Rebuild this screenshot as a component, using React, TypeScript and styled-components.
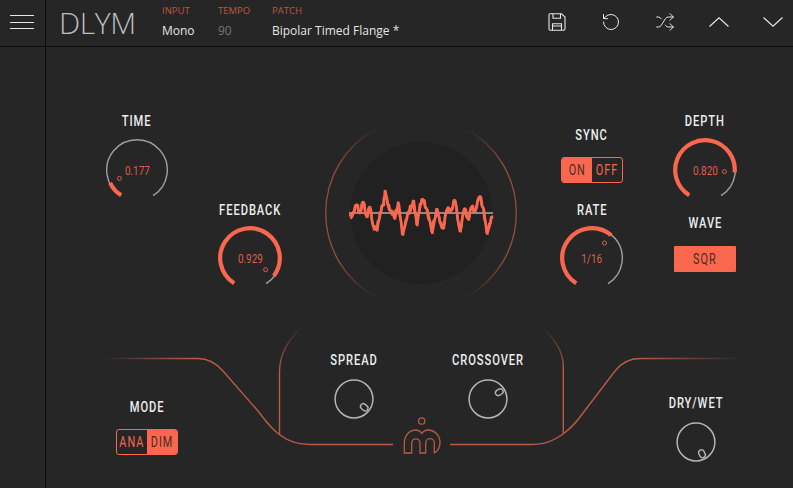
import React from "react";
import styled, { createGlobalStyle, css } from "styled-components";
import { RotateCcw, Shuffle } from "lucide-react";

const ACCENT = "#f9684e";
const LINE = "#b85a45";

const Global = createGlobalStyle`
  html, body { margin: 0; padding: 0; background: #262626; overflow: hidden; }
  * { box-sizing: border-box; }
`;

const condensed = css`
  font-family: "Roboto", "Liberation Sans", sans-serif;
  display: inline-block;
  white-space: nowrap;
  transform-origin: center;
`;

const Shell = styled.div`
  width: 793px; height: 488px; background: #262626; position: relative;
  font-family: "Open Sans", "Liberation Sans", sans-serif; overflow: hidden;
`;
const TopBar = styled.header`
  height: 47px; display: flex; align-items: stretch; border-bottom: 1px solid #0c0c0c;
`;
const MenuCell = styled.div`
  width: 46px; flex: none; border-right: 1px solid #0c0c0c; display: flex; flex-direction: column;
  gap: 5.5px; padding: 15px 11px 0 10px;
`;
const MenuLine = styled.span`
  display: block; height: 1px; background: #e8e8e8;
`;
const Brand = styled.div`
  width: 116px; flex: none; padding: 3px 0 0 13px; font-family: "Open Sans", sans-serif; font-weight: 300;
  font-size: 30px; line-height: 40px; color: #b9bec0; letter-spacing: -0.4px;
`;
const Field = styled.div<{ $w: number }>`
  width: ${p => p.$w}px; flex: none; padding-top: 5px;
`;
const FieldLabel = styled.div`
  font-size: 9.5px; line-height: 12px; color: #c0543f;
`;
const FieldValue = styled.div<{ $dim?: boolean }>`
  font-size: 12px; line-height: 18px; margin-top: 5px; color: ${p => (p.$dim ? "#777" : "#e2e4e4")};
`;
const Tools = styled.div`
  margin-left: auto; display: flex; align-items: center; gap: 30px; color: #e6e6e6; padding: 0 8px 2px 0;
`;
const Tool = styled.div`
  width: 24px; display: flex; justify-content: center; align-items: center;
`;

const Body = styled.main`
  position: relative; height: 441px; margin-left: 45px; border-left: 1px solid #0c0c0c;
`;
const Decor = styled.svg`
  position: absolute; left: -46px; top: -47px; width: 793px; height: 488px; pointer-events: none;
`;
const UpperRow = styled.section`
  display: flex; height: 296px; padding-left: 41px;
`;
const LowerRow = styled.section`
  display: flex; height: 145px; padding-left: 51px;
`;
const Column = styled.div<{ $top: number; $left?: number }>`
  width: 100px; flex: none; margin-left: ${p => p.$left ?? 0}px; padding-top: ${p => p.$top}px;
  display: flex; flex-direction: column; align-items: center;
`;
const Label = styled.div`
  ${condensed}
  font-weight: 500; font-size: 15.5px; line-height: 16px; letter-spacing: 1.3px; color: #eceeee;
  transform: scaleX(0.72);
`;
const KnobBox = styled.div<{ $gap: number }>`
  position: relative; width: 64px; height: 64px; margin-top: ${p => p.$gap}px;
`;
const KnobValueWrap = styled.div`
  position: absolute; inset: 0; display: flex; align-items: center; justify-content: center;
`;
const KnobValue = styled.span`
  ${condensed}
  font-size: 13px; color: #df5f49; transform: scaleX(0.76);
`;
const Scope = styled.div`
  width: 192px; height: 192px; flex: none; margin: 70px 25px 0 25px;
`;
const Switch = styled.div<{ $mt?: number }>`
  display: flex; width: 62px; height: 26px; margin-top: ${p => p.$mt ?? 0}px; border: 1px solid ${ACCENT};
  border-radius: 3px; overflow: hidden;
`;
const Segment = styled.div<{ $on?: boolean }>`
  flex: 1 1 0; min-width: 0; display: flex; align-items: center; justify-content: center;
  background: ${p => (p.$on ? ACCENT : "transparent")};
  color: ${p => (p.$on ? "#4a2a22" : ACCENT)};
`;
const SegmentText = styled.span`
  ${condensed}
  font-size: 15.5px; line-height: 16px; letter-spacing: 1.4px; transform: scaleX(0.7);
`;
const WaveButton = styled.div`
  width: 62px; height: 26px; margin-top: 15px; background: ${ACCENT}; border-radius: 1px;
  display: flex; align-items: center; justify-content: center; color: #4a2a22;
`;
const DialBox = styled.svg<{ $mt: number }>`
  width: 40px; height: 40px; margin-top: ${p => p.$mt}px; display: block;
`;
const Spacer = styled.div<{ $h: number }>`
  height: ${p => p.$h}px; flex: none;
`;

const polar = (cx: number, cy: number, r: number, deg: number) => {
  const a = (deg * Math.PI) / 180;
  return [cx + r * Math.sin(a), cy - r * Math.cos(a)];
};
const arc = (cx: number, cy: number, r: number, from: number, to: number) => {
  const [x1, y1] = polar(cx, cy, r, from);
  const [x2, y2] = polar(cx, cy, r, to);
  return `M${x1.toFixed(2)} ${y1.toFixed(2)}A${r} ${r} 0 ${to - from > 180 ? 1 : 0} 1 ${x2.toFixed(2)} ${y2.toFixed(2)}`;
};

const START = -148;
const END = 148;
function Knob({ value, text, gap }: { value: number; text: string; gap: number }) {
  const at = START + (END - START) * value;
  const [dotX, dotY] = polar(32, 32, 19.5, at);
  return (
    <KnobBox $gap={gap}>
      <svg width="64" height="64" viewBox="0 0 64 64" fill="none">
        <path d={arc(32, 32, 30.3, START, END)} stroke="#a0a0a0" strokeWidth="1.4" />
        <path d={arc(32, 32, 29.8, START, at)} stroke={ACCENT} strokeWidth="4.2" />
        <circle cx={dotX} cy={dotY} r="2" stroke="#d9604a" strokeWidth="1" />
      </svg>
      <KnobValueWrap><KnobValue>{text}</KnobValue></KnobValueWrap>
    </KnobBox>
  );
}

function Dial({ angle, mt }: { angle: number; mt: number }) {
  return (
    <DialBox $mt={mt} viewBox="0 0 40 40" fill="none">
      <circle cx="20" cy="20" r="18.9" stroke="#b4b4b4" strokeWidth="1.5" />
      <g transform={`rotate(${angle} 20 20)`}>
        <rect x="17.2" y="2.8" width="5.6" height="8" rx="2.8" stroke="#b4b4b4" strokeWidth="1.4" fill="#262626" />
      </g>
    </DialBox>
  );
}

const TRACE: [number, number][] = [
  [105,290],[115,275],[125,255],[135,275],[145,245],[155,290],[165,260],[175,320],[185,330],[195,275],[205,255],[210,210],[218,255],[228,270],[238,295],[250,245],[262,345],[272,300],[282,275],[295,240],[305,315],[315,250],[325,240],[335,265],[350,335],[365,265],[375,310],[385,320],[395,270],[410,265],[420,240],[435,335],[448,265],[460,295],[470,260],[480,270],[495,228],[505,265],[515,340],[523,310],[533,290]
];
const wavePts: [number, number][] = [];
const waveAlt: [number, number][] = [];
TRACE.forEach(([zx, zy], i) => {
  const x = 315 + zx / 3;
  const y = 120 + zy / 3;
  wavePts.push([x, y]);
  waveAlt.push([x + 0.6, y + (i % 3 === 0 ? 2 : i % 3 === 1 ? 0.6 : 1.2)]);
  const next = TRACE[i + 1];
  if (next) {
    const nx = 315 + next[0] / 3;
    const ny = 120 + next[1] / 3;
    wavePts.push([x + (nx - x) / 3, y + (ny - y) / 3 + (i % 2 ? 2.5 : -2.5)]);
    wavePts.push([x + ((nx - x) * 2) / 3, y + ((ny - y) * 2) / 3 + (i % 2 ? -2.5 : 2.5)]);
    waveAlt.push([(x + nx) / 2, (y + ny) / 2 + (i % 2 ? -2.5 : 3)]);
  }
});
const toPath = (pts: [number, number][]) =>
  pts.map(([x, y], i) => `${i ? "L" : "M"}${x.toFixed(1)} ${y.toFixed(1)}`).join("");

function ScopeDrawing() {
  return (
    <svg width="192" height="192" viewBox="325 117 192 192" fill="none">
      <defs>
        <linearGradient id="ring" gradientUnits="userSpaceOnUse" x1="0" y1="128" x2="0" y2="298">
          <stop offset="0" stopColor={LINE} stopOpacity="0" />
          <stop offset="0.22" stopColor={LINE} stopOpacity="0.75" />
          <stop offset="0.78" stopColor={LINE} stopOpacity="0.75" />
          <stop offset="1" stopColor={LINE} stopOpacity="0" />
        </linearGradient>
      </defs>
      <circle cx="421" cy="213" r="71" fill="#212121" />
      <path d={arc(421, 213, 95.3, 208, 332)} stroke="url(#ring)" strokeWidth="1.3" />
      <path d={arc(421, 213, 95.3, 28, 152)} stroke="url(#ring)" strokeWidth="1.3" />
      <path d="M349 213H493" stroke="#f4f4f4" strokeWidth="1" />
      <path d={toPath(wavePts)} stroke={ACCENT} strokeWidth="2.6" strokeLinejoin="bevel" />
      <path d={toPath(waveAlt)} stroke={ACCENT} strokeWidth="2.4" strokeLinejoin="bevel" />
    </svg>
  );
}

function Logo() {
  return (
    <g fill="none" stroke={LINE} strokeWidth="1.3">
      <circle cx="421.7" cy="421" r="3.2" />
      <path d="M404.3 453V443C404.3 435 410 430 416 430C419 430 420.5 431.5 421.8 433.5C423.2 431.5 425 430 428 430C435 430 440 436 440 442.5C440 447 438 451 434.3 453V443A4.3 4.3 0 0 0 425.7 443V453H420V443A4.15 4.15 0 0 0 411.7 443V453Z" />
    </g>
  );
}

function Curves() {
  return (
    <Decor viewBox="0 0 793 488" fill="none">
      <defs>
        <linearGradient id="fadeL" gradientUnits="userSpaceOnUse" x1="104" y1="0" x2="190" y2="0">
          <stop offset="0" stopColor={LINE} stopOpacity="0" />
          <stop offset="1" stopColor={LINE} />
        </linearGradient>
        <linearGradient id="fadeR" gradientUnits="userSpaceOnUse" x1="742" y1="0" x2="640" y2="0">
          <stop offset="0" stopColor={LINE} stopOpacity="0" />
          <stop offset="1" stopColor={LINE} />
        </linearGradient>
        <linearGradient id="fadeTop" gradientUnits="userSpaceOnUse" x1="0" y1="326" x2="0" y2="372">
          <stop offset="0" stopColor={LINE} stopOpacity="0" />
          <stop offset="1" stopColor={LINE} />
        </linearGradient>
      </defs>
      <path d="M104 358.5H198C209 358.5 216 363 223 371L258 411C265 420 271 429 280 435C288 441 296 444.5 310 444.5H393" stroke="url(#fadeL)" strokeWidth="1.4" />
      <path d="M742 358.5H640C630 358.5 622 362 615 371L583 413C576 423 570 429 563 434C553 441 545 444.5 530 444.5H450" stroke="url(#fadeR)" strokeWidth="1.4" />
      <path d="M279.5 435V372C279.5 354 288 340 301 328" stroke="url(#fadeTop)" strokeWidth="1.4" />
      <path d="M563.3 434V366C563 352 555 339 543 328" stroke="url(#fadeTop)" strokeWidth="1.4" />
      <Logo />
    </Decor>
  );
}

const Chevron = ({ up }: { up?: boolean }) => (
  <svg width="20" height="10" viewBox="0 0 20 10" fill="none" stroke="#e6e6e6" strokeWidth="1.2">
    <path d={up ? "M0.5 9.5L10 0.8L19.5 9.5" : "M0.5 0.5L10 9.2L19.5 0.5"} />
  </svg>
);

const SaveIcon = () => (
  <svg width="18" height="18" viewBox="0 0 18 18" fill="none" stroke="#e6e6e6" strokeWidth="1.1">
    <path d="M2 0.8H13.5L17 4V15.8A1.4 1.4 0 0 1 15.6 17.2H2.4A1.4 1.4 0 0 1 1 15.8V1.8A1 1 0 0 1 2 0.8Z" />
    <path d="M5 0.8V5.2H12.5V0.8" />
    <path d="M4.5 17.2V10.8H13.5V17.2M4.5 13H13.5" />
  </svg>
);

export default function App() {
  return (
    <Shell>
      <Global />
      <TopBar>
        <MenuCell>
          <MenuLine /><MenuLine /><MenuLine />
        </MenuCell>
        <Brand>DLYM</Brand>
        <Field $w={56}>
          <FieldLabel>INPUT</FieldLabel>
          <FieldValue>Mono</FieldValue>
        </Field>
        <Field $w={54}>
          <FieldLabel>TEMPO</FieldLabel>
          <FieldValue $dim>90</FieldValue>
        </Field>
        <Field $w={200}>
          <FieldLabel>PATCH</FieldLabel>
          <FieldValue>Bipolar Timed Flange *</FieldValue>
        </Field>
        <Tools>
          <Tool><SaveIcon /></Tool>
          <Tool><RotateCcw size={20} strokeWidth={1.2} /></Tool>
          <Tool><Shuffle size={20} strokeWidth={1.2} /></Tool>
          <Tool><Chevron up /></Tool>
          <Tool><Chevron /></Tool>
        </Tools>
      </TopBar>
      <Body>
        <Curves />
        <UpperRow>
          <Column $top={66}>
            <Label>TIME</Label>
            <Knob value={0.11} text="0.177" gap={9} />
          </Column>
          <Column $top={155} $left={13}>
            <Label>FEEDBACK</Label>
            <Knob value={0.929} text="0.929" gap={8} />
          </Column>
          <Scope><ScopeDrawing /></Scope>
          <Column $top={80}>
            <Label>SYNC</Label>
            <Switch $mt={14}>
              <Segment $on><SegmentText>ON</SegmentText></Segment>
              <Segment><SegmentText>OFF</SegmentText></Segment>
            </Switch>
            <Spacer $h={19} />
            <Label>RATE</Label>
            <Knob value={0.635} text="1/16" gap={8} />
          </Column>
          <Column $top={66} $left={13}>
            <Label>DEPTH</Label>
            <Knob value={0.82} text="0.820" gap={9} />
            <Spacer $h={13} />
            <Label>WAVE</Label>
            <WaveButton><SegmentText>SQR</SegmentText></WaveButton>
          </Column>
        </UpperRow>
        <LowerRow>
          <Column $top={56}>
            <Label>MODE</Label>
            <Switch $mt={14}>
              <Segment><SegmentText>ANA</SegmentText></Segment>
              <Segment $on><SegmentText>DIM</SegmentText></Segment>
            </Switch>
          </Column>
          <Column $top={9} $left={107}>
            <Label>SPREAD</Label>
            <Dial angle={129} mt={11} />
          </Column>
          <Column $top={9} $left={34}>
            <Label>CROSSOVER</Label>
            <Dial angle={59} mt={11} />
          </Column>
          <Column $top={52} $left={108}>
            <Label>DRY/WET</Label>
            <Dial angle={153} mt={11} />
          </Column>
        </LowerRow>
      </Body>
    </Shell>
  );
}
